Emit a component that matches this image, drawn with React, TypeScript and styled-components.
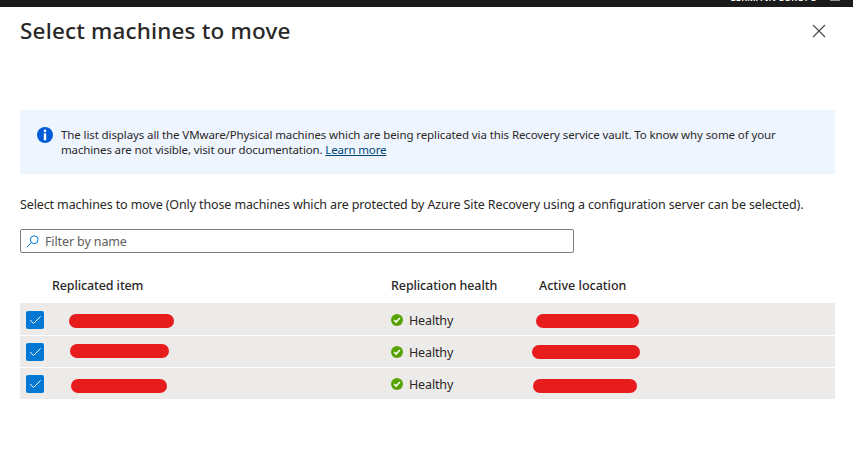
import React from "react";
import styled, { createGlobalStyle } from "styled-components";

const Global = createGlobalStyle`
  * { box-sizing: border-box; }
  body { margin: 0; background: #fff; color: #292827; font-family: "Noto Sans", "Open Sans", sans-serif; }
`;

const Page = styled.div`
  width: 853px;
  height: 471px;
  overflow: hidden;
  background: #fff;
`;

const TopBar = styled.div`
  height: 7px;
  overflow: hidden;
  background: #1b1b1b;
  display: flex;
  justify-content: flex-end;
  gap: 14px;
  padding-right: 13px;
`;

const Directory = styled.span`
  color: #fff;
  font-size: 9px;
  font-weight: 600;
  line-height: 12px;
  margin-top: -8px;
  white-space: nowrap;
  letter-spacing: 0.33px;
`;

const Avatar = styled.span`
  width: 10px;
  height: 1px;
  background: #8f959b;
`;

const Header = styled.header`
  height: 103px;
  padding: 8px 27px 0 20px;
  display: flex;
  justify-content: space-between;
  align-items: flex-start;
`;

const Title = styled.h1`
  margin: 0;
  font-size: 22.5px;
  line-height: 32px;
  font-weight: 500;
  letter-spacing: 0.17px;
  white-space: nowrap;
`;

const CloseButton = styled.button`
  border: 0;
  padding: 0;
  margin-top: 9px;
  width: 14px;
  height: 14px;
  background: none;
  display: flex;
`;

const Content = styled.main`
  width: 815px;
  margin-left: 20px;
`;

const Banner = styled.section`
  height: 64px;
  border-radius: 2px;
  background: #eff5ff;
  padding: 17px 0 0 17px;
  display: flex;
  gap: 8px;
`;

const BannerText = styled.p`
  margin: 0;
  font-size: 11.5px;
  line-height: 15px;
  white-space: nowrap;
`;

const Line = styled.span<{ $spacing: number }>`
  display: block;
  letter-spacing: ${(p) => p.$spacing}px;
`;

const Link = styled.a`
  color: #004578;
  text-decoration: underline;
`;

const Description = styled.p`
  margin: 21px 0 14px;
  height: 20px;
  font-size: 12.5px;
  line-height: 20px;
  letter-spacing: -0.121px;
  white-space: nowrap;
`;

const SearchBox = styled.div`
  width: 554px;
  height: 24px;
  border: 1px solid #7f7d7b;
  border-radius: 2px;
  padding-left: 5px;
  display: flex;
  align-items: center;
  gap: 6px;
  color: #605e5c;
  font-size: 12.5px;
  letter-spacing: -0.12px;
`;

const HeadRow = styled.div`
  height: 50px;
  padding-top: 14px;
  display: grid;
  grid-template-columns: 32px 339px 148px 1fr;
  align-items: center;
`;

const Heading = styled.span<{ $spacing?: number }>`
  font-size: 12.5px;
  font-weight: 500;
  letter-spacing: ${(p) => p.$spacing ?? 0}px;
  white-space: nowrap;
`;

const Row = styled.div<{ $height: number }>`
  height: ${(p) => p.$height}px;
  background: #ecebe9;
  display: grid;
  grid-template-columns: 32px 339px 141px 1fr;
  & + & { border-top: 1px solid #fff; }
`;

const CheckCell = styled.div<{ $top: number }>`
  padding: ${(p) => p.$top}px 0 0 6px;
`;

const Checkbox = styled.span`
  width: 18px;
  height: 18px;
  border-radius: 2px;
  background: #0078d4;
  display: flex;
`;

const Status = styled.div<{ $top: number }>`
  display: flex;
  align-items: center;
  gap: 6px;
  height: 20px;
  margin-top: ${(p) => p.$top}px;
  font-size: 12.5px;
  letter-spacing: -0.15px;
`;

const Redaction = styled.div<{ $left: number; $top: number; $width: number }>`
  width: ${(p) => p.$width}px;
  height: 14px;
  margin: ${(p) => p.$top}px 0 0 ${(p) => p.$left}px;
  border-radius: 7px;
  background: #e71c1c;
`;

const rows = [
  { height: 32, top: 8, name: [17, 11, 105], location: [4, 11, 103] },
  { height: 32, top: 7, name: [18, 8, 99], location: [0, 9, 108] },
  { height: 32, top: 7, name: [19, 11, 96], location: [1, 11, 104] },
];

const InfoIcon = () => (
  <svg width="16" height="16" viewBox="0 0 16 16">
    <circle cx="8" cy="8" r="8" fill="#015cda" />
    <circle cx="8" cy="3.9" r="1.35" fill="#fff" />
    <rect x="6.8" y="6.3" width="2.4" height="7" rx="0.4" fill="#fff" />
  </svg>
);

const SearchIcon = () => (
  <svg width="13" height="13" viewBox="0 0 13 13" fill="none" stroke="#0078d4">
    <circle cx="8.2" cy="4.7" r="3.9" />
    <path d="M5.4 7.5L0.6 12.3" />
  </svg>
);

const HealthyIcon = () => (
  <svg width="12" height="12" viewBox="0 0 12 12">
    <circle cx="6" cy="6" r="6" fill="#57a300" />
    <path d="M3.2 6.1L5.2 8.1L8.9 4.1" fill="none" stroke="#fff" strokeWidth="1.5" />
  </svg>
);

export default function App() {
  return (
    <Page>
      <Global />
      <TopBar>
        <Directory>LERMA IN EUROPE</Directory>
        <Avatar />
      </TopBar>
      <Header>
        <Title>Select machines to move</Title>
        <CloseButton aria-label="Close">
          <svg width="14" height="14" viewBox="0 0 14 14" stroke="#484644" strokeWidth="1.1">
            <path d="M1 1L13 13M13 1L1 13" />
          </svg>
        </CloseButton>
      </Header>
      <Content>
        <Banner>
          <InfoIcon />
          <BannerText>
            <Line $spacing={-0.104}>
              The list displays all the VMware/Physical machines which are being replicated via this Recovery service vault. To know why some of your
            </Line>
            <Line $spacing={-0.142}>
              machines are not visible, visit our documentation. <Link>Learn more</Link>
            </Line>
          </BannerText>
        </Banner>
        <Description>
          Select machines to move (Only those machines which are protected by Azure Site Recovery using a configuration server can be selected).
        </Description>
        <SearchBox>
          <SearchIcon />
          <span>Filter by name</span>
        </SearchBox>
        <HeadRow>
          <span />
          <Heading $spacing={-0.11}>Replicated item</Heading>
          <Heading $spacing={-0.1}>Replication health</Heading>
          <Heading>Active location</Heading>
        </HeadRow>
        {rows.map((r, i) => (
          <Row key={i} $height={r.height}>
            <CheckCell $top={r.top}>
              <Checkbox>
                <svg width="18" height="18" viewBox="0 0 18 18">
                  <path d="M4 8.9L7.6 12.5L14.6 5.4" fill="none" stroke="#fff" />
                </svg>
              </Checkbox>
            </CheckCell>
            <Redaction $left={r.name[0]} $top={r.name[1]} $width={r.name[2]} />
            <Status $top={r.top - 1}>
              <HealthyIcon />
              <span>Healthy</span>
            </Status>
            <Redaction $left={r.location[0]} $top={r.location[1]} $width={r.location[2]} />
          </Row>
        ))}
      </Content>
    </Page>
  );
}
